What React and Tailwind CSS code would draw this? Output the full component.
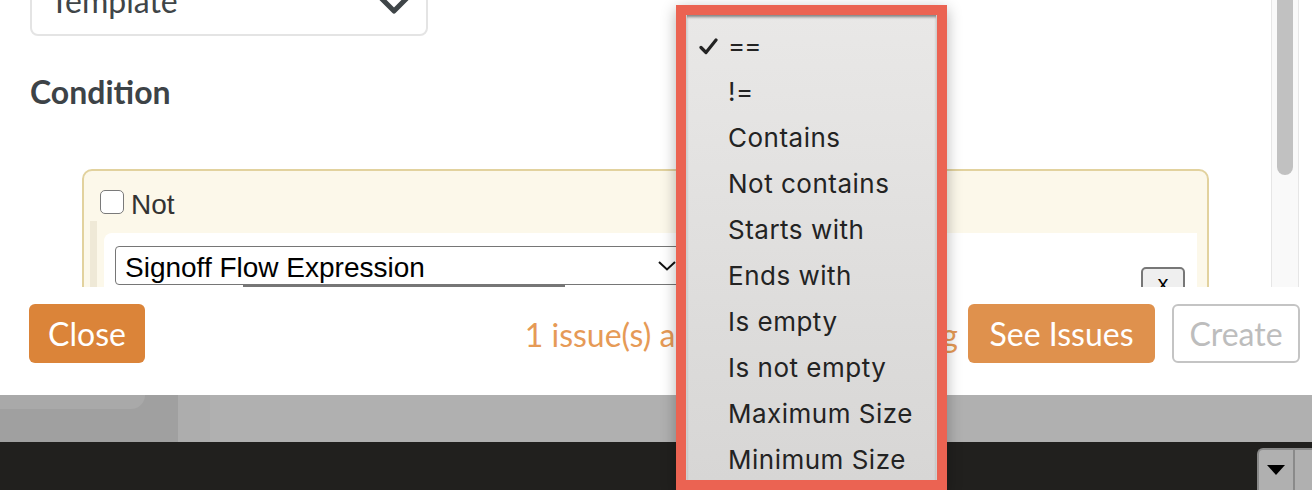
import React from 'react';

const options = ['==', '!=', 'Contains', 'Not contains', 'Starts with', 'Ends with', 'Is empty', 'Is not empty', 'Maximum Size', 'Minimum Size'];

function OperatorMenu() {
    return (
        <div className="absolute left-[676px] top-[5px] w-[271px] h-[485px] border-[10px] border-[#eb6352] shadow-[0_4px_14px_rgba(0,0,0,0.3)]">
            <div className="h-full overflow-hidden bg-gradient-to-b from-[#e9e8e7] to-[#d7d6d5] shadow-[inset_0_3px_3px_-1px_rgba(0,0,0,0.45)] border-x border-[#cfcfcf] pt-[8px] font-['Inter',sans-serif] text-[26px] tracking-[0.5px] text-[#232323]">
                {options.map((opt, i) => (
                    <div key={opt} className="relative h-[46px] flex items-center pl-[41px]">
                        {i === 0 && (
                            <svg className="absolute left-[12px] top-[15px]" width="19" height="17" viewBox="0 0 19 17">
                                <path d="M2 9.5 L7 14.5 L17 2" fill="none" stroke="#232323" strokeWidth="3.2" strokeLinecap="round" strokeLinejoin="round" />
                            </svg>
                        )}
                        <span className={i === 0 ? 'leading-none tracking-[-1px]' : 'leading-none'}>{opt}</span>
                    </div>
                ))}
            </div>
        </div>
    );
}

export default function App() {
    return (
        <div className="relative w-[1312px] h-[490px] overflow-hidden bg-white font-['Lato',sans-serif]">
            {/* modal */}
            <div className="h-[395px] flex flex-col bg-white">
                <div className="h-[287px] flex overflow-hidden">
                    <div className="flex-1 flex flex-col">
                        {/* Template select */}
                        <div className="mt-[-30px] ml-[30px] w-[398px] h-[66px] shrink-0 border-2 border-[#e4e4e4] rounded-lg flex items-end justify-between pl-[18px] pr-[16px]">
                            <span className="pb-[17px] text-[32px] leading-none text-[#3f4548]">Template</span>
                            <svg className="mb-[19px]" width="32" height="20" viewBox="0 0 32 20">
                                <path d="M3 3 L16 16 L29 3" fill="none" stroke="#3f4548" strokeWidth="5" strokeLinecap="round" strokeLinejoin="round" />
                            </svg>
                        </div>

                        <h2 className="mt-[40px] ml-[30px] text-[32px] leading-none font-bold text-[#3d4347]">Condition</h2>

                        {/* condition group */}
                        <div className="mt-[61px] ml-[82px] w-[1127px] shrink-0 border-2 border-[#e2d29e] rounded-[10px] bg-[#fcf8ea] pl-[16px] pr-[10px] pt-[19px] h-[200px]">
                            <div className="flex items-center gap-[7px] h-[24px] font-['Liberation_Sans',Arial,sans-serif] text-[28px] text-[#333]">
                                <span className="w-[24px] h-[24px] rounded-[5px] border-[1.5px] border-[#7a7a7a] bg-white" />
                                <span className="leading-none pt-[6px]">Not</span>
                            </div>
                            <div className="mt-[7px] ml-[-10px] border-l-[7px] border-[#efe9d7] pt-[12px] h-[100px]">
                                <div className="ml-[7px] bg-white rounded-tl-lg pt-[13px] pl-[11px] pr-[12px] h-[100px] flex items-start justify-between">
                                    <div className="flex flex-col">
                                        <div className="w-[575px] h-[39px] border-[1.5px] border-[#767676] rounded-[4px] bg-white flex items-center justify-between pl-[9px] pr-[13px] font-['Liberation_Sans',Arial,sans-serif] text-[28px] text-black">
                                            <span className="leading-none pt-[4px]">Signoff Flow Expression</span>
                                            <svg width="18" height="10" viewBox="0 0 18 10">
                                                <path d="M1 1 L9 8.5 L17 1" fill="none" stroke="#111" strokeWidth="2" />
                                            </svg>
                                        </div>
                                        <div className="ml-[128px] w-[322px] h-[30px] border-t-2 border-[#767676]" />
                                    </div>
                                    <div className="mt-[21px] w-[44px] h-[40px] border-2 border-[#777] rounded-[5px] bg-[#efefef] flex justify-center pt-[4px] font-['Liberation_Sans',Arial,sans-serif] text-[22px] text-black leading-none">
                                        x
                                    </div>
                                </div>
                            </div>
                        </div>
                    </div>

                    {/* scrollbar */}
                    <div className="w-[28px] shrink-0 border-x border-[#e6e6e6] bg-[#f9f9f9] flex justify-center">
                        <div className="w-[16px] h-[175px] rounded-b-full bg-[#c1c1c1]" />
                    </div>
                    <div className="w-[13px] shrink-0" />
                </div>

                {/* footer */}
                <div className="flex-1 flex items-start pt-[17px] pl-[29px] pr-[12px] text-[32px] leading-none">
                    <button className="w-[116px] h-[59px] rounded-md bg-[#db8439] text-white">Close</button>
                    <span className="ml-auto mt-[15px] mr-[10px] text-[#e69a56]">1 issue(s) are preventing saving</span>
                    <button className="w-[187px] h-[59px] rounded-md bg-[#df914d] text-white">See Issues</button>
                    <button className="ml-[17px] w-[128px] h-[59px] rounded-md border-2 border-[#c4c4c4] bg-white text-[#bdbdbd]">Create</button>
                </div>
            </div>

            {/* dimmed page beneath */}
            <div className="h-[47px] flex shadow-[inset_0_8px_8px_-6px_rgba(0,0,0,0.18)]">
                <div className="w-[178px] bg-[#a0a0a0]">
                    <div className="w-[145px] h-[14px] rounded-br-[14px] bg-[#a9a9a9]" />
                </div>
                <div className="w-[32px] bg-[#adadad]" />
                <div className="flex-1 bg-[#b0b0b0]" />
            </div>

            {/* bottom bar */}
            <div className="h-[48px] bg-[#21201e] flex justify-end items-end">
                <div className="w-[55px] h-[42px] flex bg-[#b0b0b0] border-l-2 border-t-2 border-[#8a8a8a] rounded-tl-md">
                    <div className="w-[36px] border-r-2 border-[#8a8a8a] flex items-center justify-center">
                        <svg width="18" height="10" viewBox="0 0 18 10">
                            <path d="M0 0 L18 0 L9 10 Z" fill="#000" />
                        </svg>
                    </div>
                </div>
            </div>

            <OperatorMenu />
        </div>
    );
}
